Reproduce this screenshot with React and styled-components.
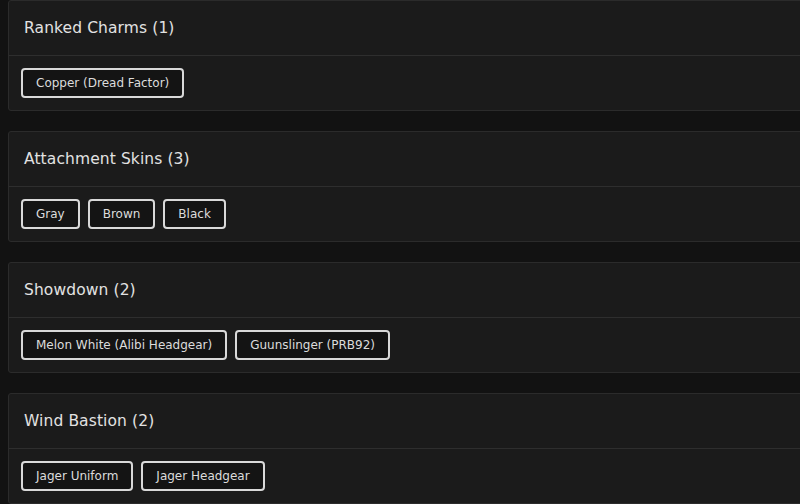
import React from "react";
import styled, { createGlobalStyle } from "styled-components";

const groups = [
  { title: "Ranked Charms", items: ["Copper (Dread Factor)"] },
  { title: "Attachment Skins", items: ["Gray", "Brown", "Black"] },
  { title: "Showdown", items: ["Melon White (Alibi Headgear)", "Guunslinger (PRB92)"] },
  { title: "Wind Bastion", items: ["Jager Uniform", "Jager Headgear"] },
];

const GlobalStyle = createGlobalStyle`
  body {
    margin: 0;
    background: #121212;
    overflow: hidden;
    font-family: "DejaVu Sans", "Open Sans", sans-serif;
  }
`;

const Page = styled.div`
  display: flex;
  flex-direction: column;
  gap: 20px;
  padding-left: 8px;
  margin-right: -30px;
`;

const Card = styled.section`
  background: #1b1b1b;
  border: 1px solid #2b2b2b;
  border-radius: 3px;
`;

const CardHeader = styled.div`
  height: 54px;
  display: flex;
  align-items: center;
  padding: 0 15px;
  border-bottom: 1px solid #2e2e2e;
`;

const Title = styled.h2`
  margin: 0 0 1px;
  font-size: 15.5px;
  font-weight: 500;
  color: #e2e2e2;
  letter-spacing: 0.1px;
`;

const CardBody = styled.div`
  height: 54px;
  display: flex;
  align-items: center;
  gap: 8px;
  padding: 0 12px;
`;

const Chip = styled.span`
  display: inline-flex;
  align-items: center;
  height: 30px;
  box-sizing: border-box;
  padding: 0 13px;
  border: 2px solid #d9d9d9;
  border-radius: 4px;
  background: #141414;
  color: #dcdcdc;
  font-size: 12px;
`;

const App = () => {
  return (
    <>
      <GlobalStyle />
      <Page>
        {groups.map((g) => (
          <Card key={g.title}>
            <CardHeader>
              <Title>
                {g.title} ({g.items.length})
              </Title>
            </CardHeader>
            <CardBody>
              {g.items.map((item) => (
                <Chip key={item}>{item}</Chip>
              ))}
            </CardBody>
          </Card>
        ))}
      </Page>
    </>
  );
};

export default App;
